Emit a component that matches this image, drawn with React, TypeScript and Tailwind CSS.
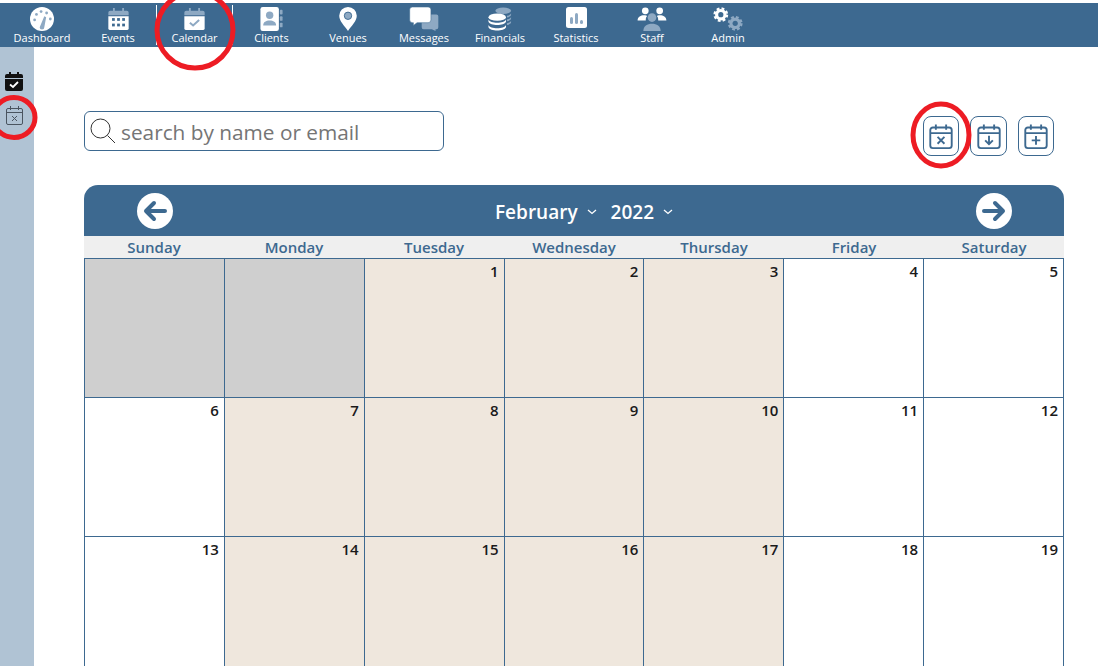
const navBlue = "#3d6990";

const days = ["Sunday", "Monday", "Tuesday", "Wednesday", "Thursday", "Friday", "Saturday"];

// null = day from another month
const weeks: (number | null)[][] = [
  [null, null, 1, 2, 3, 4, 5],
  [6, 7, 8, 9, 10, 11, 12],
  [13, 14, 15, 16, 17, 18, 19],
];

// tan cells, the rest are white
const shaded = [1, 2, 3, 7, 8, 9, 10, 14, 15, 16, 17];

const DashIcon = () => (
  <svg width="24" height="24" viewBox="0 0 26 26">
    <circle cx="13" cy="13" r="13" fill="#fff" />
    <path d="M10.500 22 L15.500 10 L17.500 11 L15.500 22 a2.500 2.500 0 0 1 -5 0z" fill="#8ea9c3" />
    <circle cx="7" cy="8" r="1.500" fill="#8ea9c3" />
    <circle cx="12" cy="5" r="1.500" fill="#8ea9c3" />
    <circle cx="18" cy="6.500" r="1.500" fill="#8ea9c3" />
    <circle cx="5" cy="14" r="1.500" fill="#8ea9c3" />
    <circle cx="22" cy="13" r="1.500" fill="#8ea9c3" />
  </svg>
);

const EventsIcon = () => (
  <svg width="21" height="24" viewBox="0 0 22 26">
    <path d="M0 9V6a2 2 0 0 1 2-2h3V1h2v3h8V1h2v3h3a2 2 0 0 1 2 2v3z" fill="#8ea9c3" />
    <path d="M0 10h22v13a2 2 0 0 1-2 2H2a2 2 0 0 1-2-2z" fill="#fff" />
    <g fill={navBlue}>
      <rect x="4" y="12" width="3" height="3" />
      <rect x="9.500" y="12" width="3" height="3" />
      <rect x="15" y="12" width="3" height="3" />
      <rect x="4" y="18" width="3" height="3" />
      <rect x="9.500" y="18" width="3" height="3" />
      <rect x="15" y="18" width="3" height="3" />
    </g>
  </svg>
);

const CalendarIcon = () => (
  <svg width="21" height="24" viewBox="0 0 22 26">
    <path d="M0 9V6a2 2 0 0 1 2-2h3V1h2v3h8V1h2v3h3a2 2 0 0 1 2 2v3z" fill="#8ea9c3" />
    <path d="M0 10h22v13a2 2 0 0 1-2 2H2a2 2 0 0 1-2-2z" fill="#fff" />
    <path d="M6 17l3.500 3 6.500-6" fill="none" stroke="#8ea9c3" strokeWidth="2.200" />
  </svg>
);

const ClientsIcon = () => (
  <svg width="23" height="24" viewBox="0 0 24 26">
    <rect x="0" y="0" width="20" height="26" rx="2.500" fill="#fff" />
    <rect x="21" y="3" width="3" height="5" rx="1" fill="#8ea9c3" />
    <rect x="21" y="10" width="3" height="5" rx="1" fill="#8ea9c3" />
    <rect x="21" y="17" width="3" height="5" rx="1" fill="#8ea9c3" />
    <circle cx="10" cy="9" r="4" fill="#8ea9c3" />
    <path d="M3 20c0-4 3-5.500 7-5.500s7 1.500 7 5.500z" fill="#8ea9c3" />
  </svg>
);

const VenuesIcon = () => (
  <svg width="18" height="24" viewBox="0 0 19 26">
    <path d="M9.500 0a9.500 9.500 0 0 1 9.500 9.500c0 6-6 11-9.500 16.500C6 20.500 0 15.500 0 9.500A9.500 9.500 0 0 1 9.500 0z" fill="#fff" />
    <circle cx="9.500" cy="9.500" r="4" fill="#8ea9c3" stroke={navBlue} strokeWidth="1" />
  </svg>
);

const MessagesIcon = () => (
  <svg width="30" height="24" viewBox="0 0 31 26">
    <path d="M13 8h16a2 2 0 0 1 2 2v12a2 2 0 0 1-2 2h-1v2l-4-2H15a2 2 0 0 1-2-2z" fill="#8ea9c3" />
    <path d="M3 0h17a3 3 0 0 1 3 3v11a3 3 0 0 1-3 3H8l-4 3v-3H3a3 3 0 0 1-3-3V3a3 3 0 0 1 3-3z" fill="#fff" stroke={navBlue} strokeWidth="0.600" />
  </svg>
);

const FinancialsIcon = () => (
  <svg width="24" height="24" viewBox="0 0 25 26">
    <ellipse cx="16" cy="4" rx="8.500" ry="3.500" fill="#8ea9c3" />
    <path d="M20 9.500c2.500-.5 4.500-1.500 4.500-3v2c0 1.500-2 2.500-4.500 3zM20 13.500c2.500-.5 4.500-1.500 4.500-3v2c0 1.500-2 2.500-4.500 3zM20 17.500c2.500-.5 4.500-1.500 4.500-3v2c0 1.500-2 2.500-4.500 3z" fill="#8ea9c3" />
    <ellipse cx="9.500" cy="11" rx="9.500" ry="4" fill="#fff" />
    <path d="M0 13.500c1 2.500 5 3.500 9.500 3.500s8.500-1 9.500-3.500v2.500c-1 2.500-5 3.500-9.500 3.500S1 18.500 0 16z" fill="#fff" />
    <path d="M0 19.500c1 2.500 5 3.500 9.500 3.500s8.500-1 9.500-3.500v2.500c-1 2.500-5 3.500-9.500 3.500S1 24.500 0 22z" fill="#fff" />
  </svg>
);

const StatisticsIcon = () => (
  <svg width="21" height="21" viewBox="0 0 21 21" className="mb-[3px]">
    <rect width="21" height="21" rx="2.500" fill="#fff" />
    <rect x="4" y="10" width="3" height="7" rx="1.500" fill="#8ea9c3" />
    <rect x="9" y="6" width="3" height="11" rx="1.500" fill="#8ea9c3" />
    <rect x="14" y="13" width="3" height="4" rx="1.500" fill="#8ea9c3" />
  </svg>
);

const StaffIcon = () => (
  <svg width="30" height="24" viewBox="0 0 30 25">
    <circle cx="15" cy="11" r="4.500" fill="#8ea9c3" />
    <path d="M6 25c0-5 4-7.500 9-7.500s9 2.500 9 7.500z" fill="#8ea9c3" />
    <circle cx="8" cy="4" r="3.500" fill="#fff" />
    <circle cx="23" cy="4" r="3.500" fill="#fff" />
    <path d="M0 14c0-4 3.500-5.500 6.500-5.500 2 0 3 .5 3.500 1-1 1-1.500 2-1.500 4.500zM30 14c0-4-3.500-5.500-6.500-5.500-2 0-3 .5-3.500 1 1 1 1.500 2 1.500 4.500z" fill="#fff" />
  </svg>
);

// cog: solid disc, a dashed ring for the teeth, hole in the middle
const Gear = ({ cx, cy, color }: { cx: number; cy: number; color: string }) => (
  <g>
    <circle cx={cx} cy={cy} r="6" fill={color} />
    <circle cx={cx} cy={cy} r="6.500" fill="none" stroke={color} strokeWidth="2.400" strokeDasharray="2.900 2.205" />
    <circle cx={cx} cy={cy} r="2.700" fill={navBlue} />
  </g>
);

const AdminIcon = () => (
  <svg width="30" height="24" viewBox="0 0 31 25">
    <Gear cx={8} cy={8} color="#fff" />
    <Gear cx={23} cy={17} color="#8ea9c3" />
  </svg>
);

const navItems = [
  { label: "Dashboard", icon: <DashIcon />, w: "w-[76px]" },
  { label: "Events", icon: <EventsIcon />, w: "w-[76px]" },
  { label: "Calendar", icon: <CalendarIcon />, w: "w-[77px]" },
  { label: "Clients", icon: <ClientsIcon />, w: "w-[77px]" },
  { label: "Venues", icon: <VenuesIcon />, w: "w-[76px]" },
  { label: "Messages", icon: <MessagesIcon />, w: "w-[76px]" },
  { label: "Financials", icon: <FinancialsIcon />, w: "w-[76px]" },
  { label: "Statistics", icon: <StatisticsIcon />, w: "w-[76px]" },
  { label: "Staff", icon: <StaffIcon />, w: "w-[76px]" },
  { label: "Admin", icon: <AdminIcon />, w: "w-[76px]" },
];

const CalOutline = ({ children }: { children: React.ReactNode }) => (
  <svg width="24" height="27" viewBox="0 0 28 30" fill="none" stroke={navBlue} strokeWidth="2.200">
    <rect x="1.500" y="4.500" width="25" height="24" rx="3" />
    <path d="M1.500 11h25M8 1v6M20 1v6" />
    {children}
  </svg>
);

const Arrow = ({ dir }: { dir: "left" | "right" }) => (
  <svg width="36" height="36" viewBox="0 0 36 36">
    <circle cx="18" cy="18" r="18" fill="#fff" />
    <path
      d={dir === "left" ? "M28 18H9M17 10l-8 8 8 8" : "M8 18h19M19 10l8 8-8 8"}
      fill="none"
      stroke={navBlue}
      strokeWidth="4"
      strokeLinecap="round"
      strokeLinejoin="round"
    />
  </svg>
);

const Chevron = () => (
  <svg width="10" height="6" viewBox="0 0 10 6" fill="none" stroke="#fff" strokeWidth="1.300">
    <path d="M1 1l4 3.500L9 1" />
  </svg>
);

const App = () => {
  return (
    <div className="relative h-[666px] overflow-hidden bg-white pt-[3px] font-['Open_Sans',sans-serif]">
      {/* top nav */}
      <div className="flex h-[44px] bg-[#3d6990] pl-[4px]">
        {navItems.map((item) => (
          <div
            key={item.label}
            className={`${item.w} flex flex-col items-center ${item.label === "Calendar" ? "relative" : ""}`}
          >
            <div className="flex h-[28px] items-end justify-center">{item.icon}</div>
            <div className="text-[11px] leading-[14px] text-white">{item.label}</div>
            {item.label === "Calendar" && (
              <>
                <div className="absolute top-[2px] left-0 h-[40px] w-px bg-white" />
                <div className="absolute top-[2px] right-0 h-[40px] w-px bg-white" />
              </>
            )}
          </div>
        ))}
      </div>

      <div className="flex h-[619px]">
        {/* side rail */}
        <div className="flex w-[34px] flex-col items-center gap-[15px] bg-[#b0c3d4] pt-[25px] pr-[6px]">
          <svg width="18" height="19" viewBox="0 0 18 19">
            <path d="M0 6V4a2 2 0 0 1 2-2h2V0h2v2h6V0h2v2h2a2 2 0 0 1 2 2v2z" fill="#111" />
            <path d="M0 7h18v10a2 2 0 0 1-2 2H2a2 2 0 0 1-2-2z" fill="#111" />
            <path d="M5 12.500l3 2.500 5-5" fill="none" stroke="#fff" strokeWidth="1.800" />
          </svg>
          <svg width="17" height="19" viewBox="0 0 17 19" fill="none" stroke="#4a5560" strokeWidth="1">
            <rect x="0.500" y="2.500" width="16" height="16" rx="1.500" />
            <path d="M0.500 6.500h16M4.500 0v4M12.500 0v4M6 10l5 5M11 10l-5 5" />
          </svg>
        </div>

        <div className="flex-1 pt-[64px] pl-[50px]">
          {/* search and actions */}
          <div className="flex items-start justify-between pr-[44px]">
            <div className="flex h-[40px] w-[360px] items-center gap-[5px] rounded-[6px] border border-[#3d6990] pl-[5px]">
              <svg width="26" height="26" viewBox="0 0 26 26" fill="none" stroke="#333" strokeWidth="1">
                <circle cx="10.500" cy="10.500" r="9.500" />
                <path d="M17.500 17.500l7.500 7.500" />
              </svg>
              <span className="pt-[2px] text-[20.800px] leading-none text-[#757575]">search by name or email</span>
            </div>
            <div className="mt-[5px] flex">
              <div className="flex h-[40px] w-[36px] items-center justify-center rounded-[8px] border border-[#3d6990]">
                <CalOutline>
                  <path d="M10 15.500l8 8M18 15.500l-8 8" />
                </CalOutline>
              </div>
              <div className="ml-[11px] flex h-[40px] w-[37px] items-center justify-center rounded-[8px] border border-[#3d6990]">
                <CalOutline>
                  <path d="M14 14v10M9.500 19.500l4.500 4.500 4.500-4.500" />
                </CalOutline>
              </div>
              <div className="ml-[11px] flex h-[40px] w-[36px] items-center justify-center rounded-[8px] border border-[#3d6990]">
                <CalOutline>
                  <path d="M14 14.500v10M9 19.500h10" />
                </CalOutline>
              </div>
            </div>
          </div>

          {/* calendar */}
          <div className="mt-[29px] w-[980px]">
            <div className="flex h-[51px] items-center justify-between rounded-t-[14px] bg-[#3d6990] pr-[52px] pl-[53px]">
              <Arrow dir="left" />
              <div className="ml-[19px] flex items-center pt-[3px] text-[19px] font-semibold text-white">
                <span>February</span>
                <span className="mr-[14px] ml-[9px]">
                  <Chevron />
                </span>
                <span>2022</span>
                <span className="ml-[9px]">
                  <Chevron />
                </span>
              </div>
              <Arrow dir="right" />
            </div>

            <div className="grid h-[23px] grid-cols-7 border-b border-[#3d6990] bg-[#efefef]">
              {days.map((d) => (
                <div key={d} className="text-center text-[15px] leading-[22px] font-semibold text-[#3d6990]">
                  {d}
                </div>
              ))}
            </div>

            {weeks.map((week, i) => (
              <div key={i} className="grid h-[139px] grid-cols-7 border-r border-b border-[#3d6990]">
                {week.map((n, j) => (
                  <div
                    key={j}
                    className={`border-l border-[#3d6990] pt-[2px] pr-[5px] text-right text-[15px] leading-[20px] font-semibold text-[#1a1a1a] ${
                      n === null ? "bg-[#cfcfcf]" : shaded.includes(n) ? "bg-[#efe7dd]" : "bg-white"
                    }`}
                  >
                    {n}
                  </div>
                ))}
              </div>
            ))}
          </div>
        </div>
      </div>

      {/* red annotation circles drawn over the screenshot */}
      <svg className="pointer-events-none absolute top-0 left-0" width="1098" height="666" fill="none" stroke="#ed1c24" strokeWidth="5">
        <ellipse cx="195" cy="30" rx="38" ry="38" />
        <ellipse cx="14" cy="117.500" rx="21" ry="20" />
        <ellipse cx="941" cy="135" rx="28" ry="31" />
      </svg>
    </div>
  );
};

export default App;
